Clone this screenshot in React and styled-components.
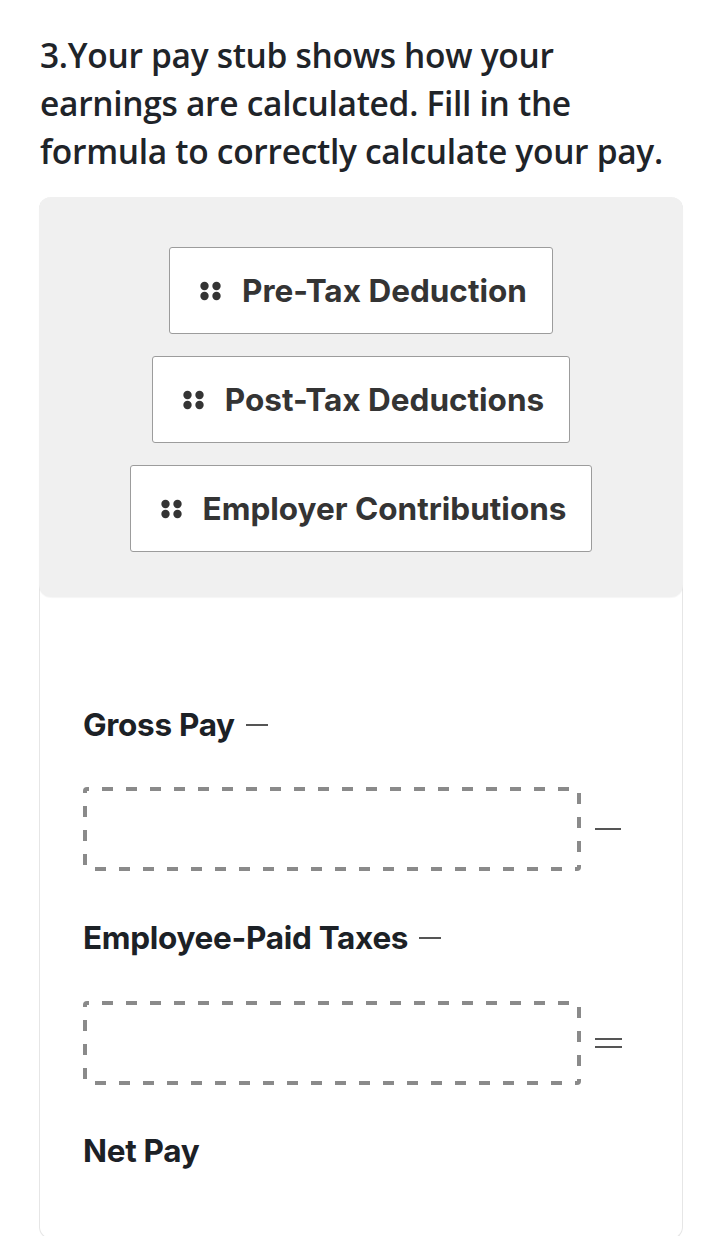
import { createGlobalStyle, styled } from "styled-components";

const GlobalStyle = createGlobalStyle`
  body {
    margin: 0;
    background: #fff;
  }
`;

const Page = styled.div`
  padding: 31px 25px 0 39px;
  font-family: "Inter", "Liberation Sans", sans-serif;
`;

const Question = styled.h2`
  margin: 0 0 22px 1px;
  font-family: "Open Sans", "Noto Sans", sans-serif;
  font-size: 33.5px;
  font-weight: 600;
  line-height: 48px;
  letter-spacing: -0.3px;
  color: #1f2429;
  max-width: 630px;
`;

const Card = styled.div`
  border: 1px solid #e6e6e6;
  border-top: none;
  border-radius: 12px;
  height: 1042px;
  box-sizing: border-box;
`;

const Bank = styled.div`
  display: flex;
  flex-direction: column;
  align-items: center;
  gap: 22px;
  padding: 50px 0 45px;
  margin: 0 -1px;
  background: #f0f0f0;
  border-radius: 12px;
  box-shadow: 0 1px 1px rgba(0, 0, 0, 0.04);
`;

const Chip = styled.div`
  display: flex;
  align-items: center;
  gap: 21px;
  height: 87px;
  box-sizing: border-box;
  padding: 0 25px 0 30px;
  background: #fff;
  border: 1.5px solid #9c9c9c;
  border-radius: 3px;
  font-size: 31.5px;
  font-weight: 700;
  color: #343434;
  cursor: grab;
`;

const Formula = styled.div`
  padding: 108px 43px 0;
`;

const Term = styled.div`
  display: flex;
  align-items: center;
  gap: 11px;
  font-size: 31.5px;
  font-weight: 700;
  line-height: 40px;
  letter-spacing: -0.3px;
  color: #1c2126;
`;

const Op = styled.span`
  display: inline-block;
  width: ${(p) => p.width || 22}px;
  height: ${(p) => (p.double ? 10 : 2)}px;
  border-top: 2px solid #555;
  border-bottom: ${(p) => (p.double ? "2px solid #555" : "none")};
  box-sizing: border-box;
`;

const DropRow = styled.div`
  display: flex;
  align-items: center;
  gap: 14px;
  margin: ${(p) => p.top}px 0 ${(p) => p.bottom}px;
`;

const dash = "#8a8a8a";
// 6px corner arm, 13px gap, 11px dash, repeating every 24px
const dashes = (deg) =>
  `repeating-linear-gradient(${deg}, ${dash} 0 6px, transparent 6px 19px, ${dash} 19px 24px)`;

const DropZone = styled.div`
  width: 498px;
  height: 84px;
  border-radius: 4px;
  background-image: ${dashes("90deg")}, ${dashes("270deg")}, ${dashes("180deg")},
    ${dashes("0deg")};
  background-size: 100% 4px, 100% 4px, 4px 100%, 4px 100%;
  background-position: 0 0, 0 100%, 0 0, 100% 0;
  background-repeat: no-repeat;
`;

const Grip = () => (
  <svg width="21" height="20" viewBox="0 0 21 20">
    <circle cx="4.5" cy="5" r="4.2" fill="#343434" />
    <circle cx="16.5" cy="5" r="4.2" fill="#343434" />
    <circle cx="4.5" cy="15" r="4.2" fill="#343434" />
    <circle cx="16.5" cy="15" r="4.2" fill="#343434" />
  </svg>
);

const choices = ["Pre-Tax Deduction", "Post-Tax Deductions", "Employer Contributions"];

export default function App() {
  return (
    <Page>
      <GlobalStyle />
      <Question>
        3.Your pay stub shows how your earnings are calculated. Fill in the formula to correctly
        calculate your pay.
      </Question>
      <Card>
        <Bank>
          {choices.map((c) => (
            <Chip key={c}>
              <Grip />
              {c}
            </Chip>
          ))}
        </Bank>
        <Formula>
          <Term>
            Gross Pay <Op />
          </Term>
          <DropRow top={42} bottom={47}>
            <DropZone />
            <Op width={26} />
          </DropRow>
          <Term>
            Employee-Paid Taxes <Op />
          </Term>
          <DropRow top={43} bottom={46}>
            <DropZone />
            <Op width={27} double />
          </DropRow>
          <Term>Net Pay</Term>
        </Formula>
      </Card>
    </Page>
  );
}
